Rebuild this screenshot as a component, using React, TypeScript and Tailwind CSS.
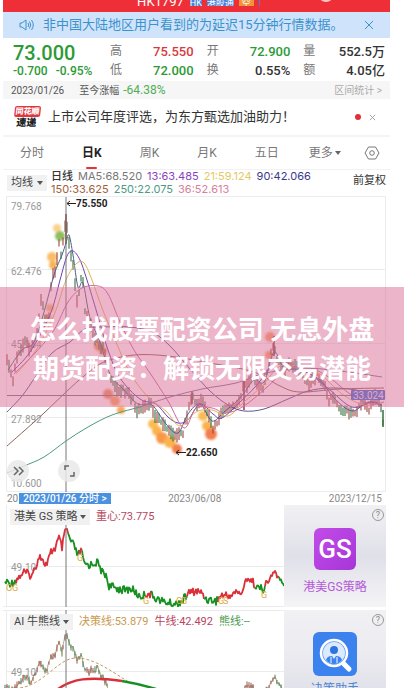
import { useState } from "react";

type Pt = [number, number];

const PRICE: Pt[] = [
  [7, 362], [10, 368], [13, 378], [17, 358], [21, 350], [25, 342], [29, 350], [33, 345], [38, 326], [41, 297], [45, 318], [49, 318],
  [52, 275], [56, 268], [59, 245], [61, 258], [64, 238], [66, 220], [68, 238], [70, 250], [73, 268], [77, 300], [79, 296],
  [82, 270], [85, 312], [92, 330], [98, 345], [104, 348], [108, 370], [113, 384], [122, 390], [130, 395], [138, 412], [143, 405],
  [150, 404], [156, 416], [163, 424], [170, 430], [177, 436], [183, 432], [188, 412], [192, 398], [198, 404], [203, 402],
  [208, 412], [212, 428], [217, 426], [222, 410], [230, 408], [238, 404], [244, 386], [254, 376], [260, 392], [266, 380],
  [270, 356], [274, 346], [278, 362], [284, 372], [290, 364], [298, 368], [308, 384], [318, 374], [324, 384], [329, 400],
  [334, 394], [340, 408], [348, 412], [355, 414], [362, 400], [368, 412], [375, 393], [380, 405], [383, 424],
];

const GS_LINE: Pt[] = [
  [5, 582], [12, 583], [16, 580], [24, 572], [32, 576], [40, 554], [43, 562], [47, 565], [51, 552], [55, 548], [59, 538], [62, 548],
  [66, 528], [70, 540], [74, 546], [78, 556], [81, 549], [84, 564], [90, 565], [97, 562], [102, 572], [106, 575], [109, 586],
  [116, 588], [124, 590], [132, 589], [140, 597], [148, 593], [156, 598], [164, 602], [176, 604], [183, 600], [188, 593],
  [196, 591], [202, 593], [206, 599], [216, 601], [222, 595], [229, 596], [236, 592], [243, 593], [246, 577], [252, 581],
  [258, 588], [263, 589], [268, 582], [275, 571], [280, 581], [284, 587],
];

// red / green stretches of the strategy line
const GS_RANGES: { from: number; to: number; up: boolean }[] = [
  { from: 5, to: 16, up: false },
  { from: 16, to: 68, up: true },
  { from: 68, to: 79, up: false },
  { from: 79, to: 82, up: true },
  { from: 82, to: 145, up: false },
  { from: 145, to: 151, up: true },
  { from: 151, to: 187, up: false },
  { from: 187, to: 204, up: true },
  { from: 204, to: 218, up: false },
  { from: 218, to: 255, up: true },
  { from: 255, to: 265, up: false },
  { from: 265, to: 279, up: true },
  { from: 279, to: 284, up: false },
];

function noise(n: number) {
  const v = Math.sin(n * 12.9898) * 43758.5453;
  return v - Math.floor(v) - 0.5;
}

function at(pts: Pt[], x: number) {
  for (let i = 1; i < pts.length; i++) {
    const [x0, y0] = pts[i - 1];
    const [x1, y1] = pts[i];
    if (x <= x1) return y0 + ((x - x0) / (x1 - x0)) * (y1 - y0);
  }
  return pts[pts.length - 1][1];
}

function smooth(pts: Pt[]) {
  let d = `M${pts[0][0]} ${pts[0][1]}`;
  for (let i = 0; i < pts.length - 1; i++) {
    const a = pts[i - 1] ?? pts[i];
    const b = pts[i];
    const c = pts[i + 1];
    const e = pts[i + 2] ?? c;
    d += `C${b[0] + (c[0] - a[0]) / 6} ${b[1] + (c[1] - a[1]) / 6} ${c[0] - (e[0] - b[0]) / 6} ${c[1] - (e[1] - b[1]) / 6} ${c[0]} ${c[1]}`;
  }
  return d;
}

function jagged(pts: Pt[], from: number, to: number, amp: number) {
  const out: string[] = [];
  for (let x = from; x <= to; x += 1) out.push(`${x},${(at(pts, x) + noise(x) * amp).toFixed(1)}`);
  return out.join(" ");
}

function Candles({ pts, size, end, width }: { pts: Pt[]; size: number; end: number; width: number }) {
  const bars = [];
  for (let x = pts[0][0]; x < end; x += 2) {
    const y = at(pts, x) + noise(x) * size * 0.6;
    const h = size * (0.5 + Math.abs(noise(x + 7)) * 1.6);
    const falling = at(pts, x + 2) > at(pts, x - 1);
    const up = falling ? noise(x + 3) > 0.1 : noise(x + 3) > -0.35;
    bars.push(
      <line key={x} x1={x} x2={x} y1={y - h / 2} y2={y + h / 2} stroke={up ? "#9a4440" : "#35703c"} strokeWidth={width} />
    );
  }
  return <g opacity="0.9">{bars}</g>;
}

const AVERAGES: { color: string; pts: Pt[] }[] = [
  { color: "#4d5f86", pts: [[8, 370], [22, 350], [34, 342], [44, 312], [54, 275], [62, 255], [66, 243], [69, 235], [73, 255], [78, 287], [83, 283], [90, 318], [100, 342], [110, 374], [122, 388], [138, 404], [152, 405], [166, 424], [178, 433], [188, 414], [200, 404], [212, 421], [224, 412], [240, 398], [254, 380], [264, 382], [274, 352], [284, 368], [300, 370], [320, 380], [334, 398], [352, 411], [368, 402], [382, 406]] },
  { color: "#6b3fb0", pts: [[12, 372], [30, 352], [50, 315], [60, 280], [67, 256], [73, 251], [80, 260], [87, 280], [97, 313], [108, 350], [120, 378], [140, 399], [156, 404], [168, 417], [178, 423], [188, 420], [200, 404], [213, 414], [222, 418], [240, 402], [256, 386], [276, 362], [290, 364], [310, 374], [330, 390], [352, 407], [372, 402], [382, 405]] },
  { color: "#e3b45c", pts: [[16, 374], [36, 350], [54, 315], [66, 280], [76, 264], [84, 263], [92, 280], [102, 308], [116, 342], [130, 373], [148, 397], [166, 411], [180, 426], [196, 412], [212, 410], [228, 416], [244, 402], [262, 386], [280, 366], [300, 367], [320, 374], [342, 394], [364, 405], [382, 403]] },
  { color: "#c76aa0", pts: [[14, 374], [36, 352], [54, 330], [68, 302], [82, 288], [98, 286], [108, 294], [120, 322], [134, 350], [150, 373], [168, 401], [184, 428], [196, 408], [212, 408], [226, 413], [244, 406], [266, 388], [288, 369], [310, 368], [330, 378], [350, 394], [370, 404], [384, 402]] },
  { color: "#5f5590", pts: [[7, 412], [22, 396], [36, 376], [52, 353], [70, 342], [85, 329], [104, 327], [130, 327], [152, 332], [170, 346], [190, 369], [210, 391], [228, 405], [244, 411], [264, 409], [288, 399], [308, 391], [330, 388], [356, 390], [384, 397]] },
  { color: "#8c6358", pts: [[7, 446], [24, 431], [44, 413], [66, 392], [84, 376], [104, 362], [134, 355], [168, 356], [210, 363], [254, 372], [280, 386], [300, 392], [340, 389], [384, 388]] },
  { color: "#4b9a86", pts: [[7, 473], [24, 466], [44, 457], [66, 441], [88, 427], [112, 415], [140, 407]] },
  { color: "#83729b", pts: [[140, 407], [170, 397], [202, 389], [236, 383], [262, 374], [300, 368], [340, 371], [382, 377]] },
];

const GLOWS: [number, number, number, string][] = [
  [57, 228, 4, "#f9c878"], [60, 236, 5, "#7cb342"], [52, 257, 5, "#f9b24e"], [53, 265, 4, "#f7a63a"], [50, 308, 4, "#f7b25a"], [48, 318, 4, "#f7b25a"],
  [99, 346, 5, "#f08a3c"], [103, 351, 4, "#f08a3c"], [108, 394, 5, "#ee7c40"], [115, 401, 5, "#f79a3a"], [121, 410, 4, "#f79a3a"],
  [153, 424, 5, "#fbb03b"], [157, 431, 5, "#fba62f"], [162, 438, 6, "#f6862b"], [170, 442, 6, "#fba62f"], [177, 449, 5, "#f2682f"],
  [203, 416, 5, "#fbb03b"], [207, 426, 5, "#fba62f"], [211, 434, 6, "#f2682f"], [270, 337, 5, "#f5924a"], [269, 355, 4, "#f5924a"],
];

function MainChart() {
  return (
    <svg viewBox="3 196 387 296" className="block h-auto w-full font-['Roboto',sans-serif]">
      <defs>
        <filter id="glow">
          <feGaussianBlur stdDeviation="1.3" />
        </filter>
      </defs>
      <g stroke="#ececec">
        <path d="M6.500 196.500H385.500V491.500H6.500zM6 269.500H385M6 343.500H385M6 417.500H385" fill="none" />
      </g>
      <g fill="#999" fontSize="10">
        <text x="11" y="210">79.768</text>
        <text x="11" y="275">62.476</text>
        <text x="11" y="348">45.184</text>
        <text x="11" y="423">27.892</text>
        <text x="11" y="487">10.600</text>
      </g>
      <g filter="url(#glow)" opacity="0.85">
        {GLOWS.map(([x, y, r, c]) => (
          <circle key={`${x}-${y}`} cx={x} cy={y} r={r} fill={c} />
        ))}
      </g>
      <Candles pts={PRICE} size={11} end={384} width={1.2} />
      <path d="M66 214V244M192 391V404M244 378V410M274 336V356" stroke="#8e3d3d" strokeWidth="1.500" />
      <path d="M383 410V427" stroke="#35703c" strokeWidth="1.500" />
      <g fill="none">
        {AVERAGES.map((a) => (
          <path key={a.color} d={smooth(a.pts)} stroke={a.color} />
        ))}
      </g>
      <path d="M7 395.500H384M66 197V492" stroke="#777" fill="none" />
      <rect x="351" y="390" width="34" height="10" rx="1" fill="#3f6fd0" />
      <text x="353" y="399" fontSize="10" fill="#dfe8ff">33.024</text>
      <g fill="none" stroke="#222">
        <path d="M67 203.500H76M70 201L67 203.500L70 206M176 452.500H186M179 450L176 452.500L179 455" />
      </g>
      <g fill="#222" fontSize="10" fontWeight="700">
        <text x="76" y="207">75.550</text>
        <text x="186" y="456">22.650</text>
      </g>
      <g fill="none" stroke="#666" strokeWidth="1.500">
        <circle cx="18" cy="471" r="11" fill="#e9e9e9" fillOpacity="0.85" stroke="none" />
        <path d="M14 467L18 471L14 475M19 467L23 471L19 475" />
        <circle cx="69" cy="471" r="11" fill="#e9e9e9" fillOpacity="0.85" stroke="none" />
        <path d="M65 470V466H69M70 476H74V472" />
      </g>
    </svg>
  );
}

function GsChart() {
  return (
    <svg viewBox="3 505 281 102" className="block h-auto w-full font-['Roboto',sans-serif]">
      <path d="M6.500 505V607M6 566.500H284M3 606.500H284" stroke="#ececec" fill="none" />
      <text x="11" y="571" fontSize="10" fill="#999">49.10</text>
      <g fill="none" strokeWidth="1.800" strokeLinejoin="round">
        {GS_RANGES.map((r) => (
          <polyline key={r.from} points={jagged(GS_LINE, r.from, r.to, 8)} stroke={r.up ? "#d9303a" : "#179022"} />
        ))}
      </g>
      <g fill="#e0a83c" fontSize="9">
        <text x="6" y="591">G</text>
        <text x="12" y="591">G</text>
        <text x="77" y="561">G</text>
        <text x="143" y="604">G</text>
        <text x="176" y="604">G</text>
        <text x="181" y="604">G</text>
        <text x="218" y="604">G</text>
        <text x="223" y="604">S</text>
        <text x="261" y="598">G</text>
      </g>
      <path d="M66 523V607" stroke="#777" />
    </svg>
  );
}

function BullBearChart() {
  const pts = GS_LINE.map(([x, y]) => [x, y + 106] as Pt);
  return (
    <svg viewBox="3 610 281 78" className="block h-auto w-full font-['Roboto',sans-serif]">
      <path d="M6.500 610V688M6 671.500H284M3 610.500H284" stroke="#ececec" fill="none" />
      <text x="11" y="676" fontSize="10" fill="#999">49.10</text>
      <polyline points={jagged(pts, 5, 284, 8)} fill="none" stroke="#8a8a5c" strokeWidth="0.700" />
      <Candles pts={pts} size={6} end={284} width={1} />
      <path d="M20 688C45 684 58 658 76 658C95 658 112 672 132 684" fill="none" stroke="#c59a62" strokeDasharray="3 2" />
      <path d="M58 689C72 679 88 676 122 681" fill="none" stroke="#d9303a" strokeWidth="2.500" />
      <path d="M122 681C134 683 146 686 156 689" fill="none" stroke="#179022" strokeWidth="2.500" />
      <path d="M66 610V688" stroke="#777" />
    </svg>
  );
}

function Picker({ label, options, className }: { label: string; options: string[]; className: string }) {
  return (
    <label className={`relative flex h-4 items-center bg-[#f1f1f1] text-[11px] text-[#444] ${className}`}>
      <select aria-label={label} className="h-4 w-full cursor-pointer appearance-none bg-transparent pl-1 leading-4 outline-none">
        {options.map((o) => (
          <option key={o}>{o}</option>
        ))}
      </select>
      <svg viewBox="0 0 6 4" className="pointer-events-none absolute right-1 h-1 w-[6px]">
        <path d="M0 0H6L3 4z" fill="#555" />
      </svg>
    </label>
  );
}

function Help() {
  return (
    <button aria-label="帮助" className="absolute right-[2px] top-1 flex h-3 w-3 items-center justify-center rounded-full border border-[#999] text-[9px] leading-none text-[#888]">
      ?
    </button>
  );
}

const QUOTES = [
  [["高", "75.550", "text-[#d63a3f]"], ["开", "72.900", "text-[#2c9a35]"], ["量", "552.5万", "text-[#333]"]],
  [["低", "72.000", "text-[#2c9a35]"], ["换", "0.55%", "text-[#333]"], ["额", "4.05亿", "text-[#333]"]],
];

const MA_TEXT = [
  ["MA5:68.520", "text-[#777]"],
  ["13:63.485", "text-[#8a3fc0]"],
  ["21:59.124", "text-[#e2c964]"],
  ["90:42.066", "text-[#39398c]"],
];

const TABS = ["分时", "日K", "周K", "月K", "五日"];

export default function App() {
  const [tab, setTab] = useState("日K");
  const [notice, setNotice] = useState(true);
  const [promo, setPromo] = useState(true);

  return (
    <div className="relative overflow-hidden bg-white pb-[7px] font-['Roboto','Noto_Sans_CJK_SC',sans-serif]">
      <main className="ml-[3px] mr-[14px]">
        <header className="flex h-3 items-start justify-center overflow-hidden bg-[#ee2f38] pl-[78px] text-white">
          <h1 className="-mt-1 mr-[6px] text-[13px] leading-[12px]">HK1797</h1>
          <div className="flex h-3 gap-[5px] text-[9px] leading-[7px]">
            <span className="h-[6px] overflow-hidden bg-[#4b80d8]">HK</span>
            <span className="h-[6px] overflow-hidden bg-[#4b80d8]">港股通</span>
            <span className="h-[6px] overflow-hidden bg-[#f29436] px-[3px]">空</span>
            <span className="h-[6px] w-px bg-[#4b80d8]" />
          </div>
          <span className="-mt-[14px] ml-[58px] h-4 w-4 rounded-full bg-[#f8c5c8]" />
        </header>

        {notice && (
          <div className="flex h-[26px] items-center bg-[#cfe4fb] pl-4 pr-4 text-[13px] text-[#3c92cc]">
            <svg viewBox="0 0 15 12" className="mr-[9px] h-3 w-[15px]" fill="none" stroke="currentColor">
              <path d="M1 4H3L7 1V11L3 8H1zM9 4Q10.500 6 9 8M10.500 2.500Q13 6 10.500 9.500M12.500 1Q16 6 12.500 11" />
            </svg>
            <p className="flex-1 whitespace-nowrap">非中国大陆地区用户看到的为延迟15分钟行情数据。</p>
            <button aria-label="关闭通知" onClick={() => setNotice(false)}>
              <svg viewBox="0 0 10 10" className="h-[10px] w-[10px]" stroke="currentColor">
                <path d="M1 1L9 9M9 1L1 9" />
              </svg>
            </button>
          </div>
        )}

        <section className="flex h-[43px] pl-[10px] pr-[5px] pt-1">
          <div className="w-[97px] font-medium text-[#2c9a35]">
            <p className="text-[20px] leading-[22px]">73.000</p>
            <p className="flex gap-2 text-[12px] leading-[14px]">
              <span>-0.700</span>
              <span>-0.95%</span>
            </p>
          </div>
          <dl className="flex-1 text-[13px] leading-[19px]">
            {QUOTES.map((row, i) => (
              <div key={i} className="grid grid-cols-[84fr_84fr_82fr] gap-[13px]">
                {row.map(([name, value, color]) => (
                  <div key={name} className="flex justify-between whitespace-nowrap">
                    <dt className="text-[12px] text-[#777]">{name}</dt>
                    <dd className={`font-medium ${color}`}>{value}</dd>
                  </div>
                ))}
              </div>
            ))}
          </dl>
        </section>

        <div className="flex h-[18px] items-center bg-[#f6f6f6] pl-2 pr-2 text-[10px] text-[#555]">
          <span className="mr-[15px]">2023/01/26</span>
          <span className="mr-1">至今涨幅</span>
          <span className="flex-1 text-[12px] text-[#4fae55]">-64.38%</span>
          <a href="#stats" className="text-[#aaa]">区间统计 &gt;</a>
        </div>

        {promo && (
          <div className="flex h-[38px] items-center border-b-2 border-[#f4f4f4] pl-[11px] pr-[14px]">
            <div className="mr-2 flex w-[26px] -skew-x-6 flex-col items-center text-[8px] font-black leading-[11px]">
              <span className="w-full rounded-xs bg-[#e0363e] text-center text-white">同花顺</span>
              <span className="text-[10px] text-[#222]">速递</span>
            </div>
            <p className="flex-1 whitespace-nowrap text-[13px] text-[#333]">上市公司年度评选，为东方甄选加油助力！</p>
            <span className="mr-2 h-[6px] w-[6px] rounded-full bg-[#e02f38]" />
            <button aria-label="关闭" onClick={() => setPromo(false)}>
              <svg viewBox="0 0 8 8" className="h-[7px] w-[7px]" stroke="#999">
                <path d="M1 1L7 7M7 1L1 7" />
              </svg>
            </button>
          </div>
        )}

        <nav className="flex h-[33px] items-center border-b border-[#f2f2f2] pl-[17px] pr-[10px] text-[12px] text-[#777]">
          <div className="flex h-full gap-[38px]">
            {TABS.map((t) => (
              <button key={t} onClick={() => setTab(t)} className={`relative h-full ${t === tab ? "font-bold text-[#222]" : ""}`}>
                {t}
                {t === tab && <span className="absolute bottom-0 left-1 h-[2px] w-[11px] rounded-full bg-[#e0363e]" />}
              </button>
            ))}
          </div>
          <div className="ml-[30px] flex flex-1 items-center justify-between">
            <button className="flex items-center gap-[2px]">
              更多
              <svg viewBox="0 0 6 4" className="h-1 w-[6px]">
                <path d="M0 0H6L3 4z" fill="#666" />
              </svg>
            </button>
            <button aria-label="设置">
              <svg viewBox="0 0 16 14" className="h-[14px] w-4" fill="none" stroke="#777">
                <path d="M4.500 1H11.500L15 7L11.500 13H4.500L1 7z" strokeLinejoin="round" />
                <circle cx="8" cy="7" r="2.300" />
              </svg>
            </button>
          </div>
        </nav>

        <section className="flex h-[26px] items-center pl-1 pr-1">
          <Picker label="均线" options={["均线"]} className="mr-1 w-[40px]" />
          <div className="flex-1 whitespace-nowrap font-['Inter','Noto_Sans_CJK_SC',sans-serif] text-[11px] leading-[13px]">
            <p className="flex gap-[5px]">
              <span className="font-medium text-[#333]">日线</span>
              {MA_TEXT.map(([t, c]) => (
                <span key={t} className={c}>{t}</span>
              ))}
            </p>
            <p className="flex gap-[5px]">
              <span className="text-[#a0613c]">150:33.625</span>
              <span className="text-[#4b9a86]">250:22.075</span>
              <span className="text-[#d8809a]">36:52.613</span>
            </p>
          </div>
          <span className="mb-1 text-[11px] leading-[14px] text-[#333]">前复权</span>
        </section>

        <MainChart />

        <div className="flex h-[13px] items-center justify-between pl-1 pr-2 text-[10px] leading-[11px] text-[#888]">
          <div className="flex">
            <span>20</span>
            <button className="ml-px bg-[#4a92e0] px-1 font-medium text-white">2023/01/26 分时 &gt;</button>
          </div>
          <span className="mr-[50px]">2023/06/08</span>
          <span>2023/12/15</span>
        </div>

        <section className="flex">
          <div className="relative flex-[281]">
            <GsChart />
            <div className="absolute left-[7px] top-1 flex items-center gap-[6px] text-[11px]">
              <Picker label="港美 GS 策略" options={["港美 GS 策略"]} className="w-[80px]" />
              <span className="whitespace-nowrap text-[#b8455c]">重心:73.775</span>
            </div>
          </div>
          <div className="relative mr-1 flex flex-[102] flex-col items-center bg-linear-to-b from-[#f1f1f4] via-[#e0e0e9] to-[#f4f4f6] pt-[23px]">
            <Help />
            <div className="flex h-[42px] w-[42px] items-center justify-center rounded-md bg-linear-to-br from-[#c24be8] to-[#a636d8] text-[26px] font-medium text-white">GS</div>
            <span className="mt-2 text-[12px] leading-[18px] text-[#b45ad8]">港美GS策略</span>
          </div>
        </section>

        <section className="mt-[3px] flex">
          <div className="relative flex-[281]">
            <BullBearChart />
            <div className="absolute left-[7px] top-1 flex items-center gap-[6px] whitespace-nowrap text-[11px]">
              <Picker label="AI 牛熊线" options={["AI 牛熊线"]} className="w-[63px]" />
              <span className="text-[#c99a4e]">决策线:53.879</span>
              <span className="text-[#b8455c]">牛线:42.492</span>
              <span className="text-[#4c9a50]">熊线:--</span>
            </div>
          </div>
          <div className="relative mr-1 flex h-[78px] flex-[102] flex-col items-center overflow-hidden bg-linear-to-b from-[#f1f1f4] via-[#ececf1] to-[#e2e2ea] pt-[22px]">
            <Help />
            <svg viewBox="0 0 44 44" className="h-11 w-11 shrink-0">
              <rect width="44" height="44" rx="6" fill="#3b82ee" />
              <path d="M31 32L36 37" stroke="#fff" strokeWidth="5" strokeLinecap="round" />
              <circle cx="21" cy="21" r="13" fill="#5c9bf4" stroke="#fff" strokeWidth="2.500" />
              <circle cx="21" cy="21" r="11" fill="#dceafd" />
              <circle cx="21" cy="18" r="4" fill="#2f74de" />
              <path d="M13 28Q14 24 19 24L21 27L23 24Q28 24 29 28Q26 32 21 32Q16 32 13 28z" fill="#3b82ee" />
              <path d="M18 25V31M24 25V31" stroke="#fff" />
            </svg>
            <span className="mt-[4px] text-[12px] leading-[18px] text-[#4a86d8]">决策助手</span>
          </div>
        </section>
      </main>

      <div className="absolute inset-x-0 top-[287px] flex h-[120px] flex-col items-center justify-center bg-[#da6b94]/50 pt-[6px] text-[26px] font-bold leading-[39px] whitespace-nowrap text-white">
        <span>怎么找股票配资公司 无息外盘</span>
        <span>期货配资：解锁无限交易潜能</span>
      </div>
    </div>
  );
}
